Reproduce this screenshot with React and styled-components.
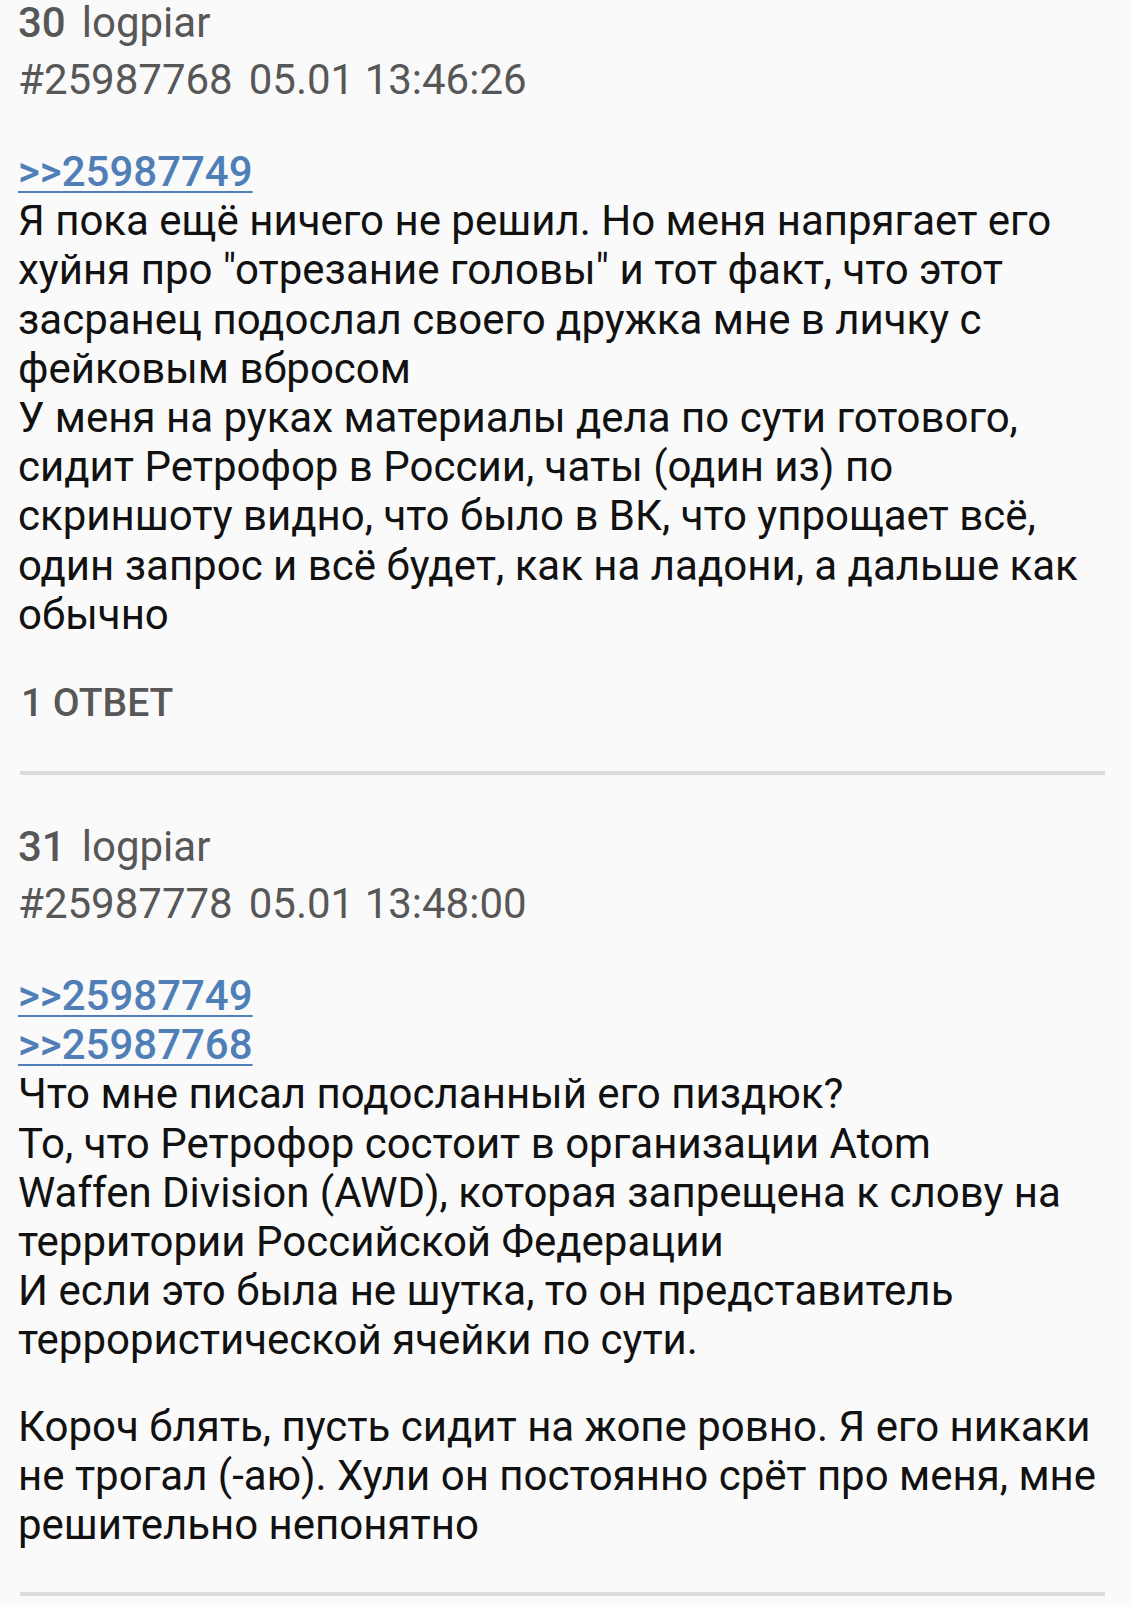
import React from 'react';
import styled, { createGlobalStyle } from 'styled-components';

const GlobalStyle = createGlobalStyle`
  html, body {
    margin: 0;
    padding: 0;
    background-color: #fafafa;
  }

  body {
    font-family: Roboto, "Noto Sans", "Liberation Sans", sans-serif;
    -webkit-font-smoothing: antialiased;
  }
`;

// Styled Components
const Thread = styled.div`
  width: 1132px;
  overflow: hidden;
  background-color: #fafafa;
`;

const Feed = styled.div`
  display: flex;
  flex-direction: column;
`;

// the first post is scrolled partly out of view, so it has no top padding
const Post = styled.article`
  display: flex;
  flex-direction: column;
  padding: ${({ $scrolled }) => ($scrolled ? '0' : '49px')} 18px 43px 18px;
`;

const PostHeader = styled.header`
  display: flex;
  flex-direction: column;
  gap: 12px;
  font-size: 42px;
  line-height: 45px;
  color: #575757;
`;

const HeaderRow = styled.div`
  display: flex;
  gap: 16px;
  white-space: nowrap;
`;

const PostNumber = styled.span`
  font-weight: 500;
`;

const Comment = styled.div`
  margin-top: 45px;
  font-size: 42px;
  line-height: 49.2px;
  color: #111111;
`;

const Paragraph = styled.div`
  & + & {
    margin-top: 37px;
  }
`;

const Line = styled.div`
  white-space: nowrap;
`;

const QuoteLink = styled.a`
  display: block;
  width: fit-content;
  color: #4f7fb6;
  font-weight: 500;
  text-decoration: underline;
  text-decoration-thickness: 2px;
  text-underline-offset: 5px;
  cursor: pointer;
`;

const RepliesButton = styled.button`
  align-self: flex-start;
  margin-top: 40px;
  padding: 0 0 0 3px;
  border: none;
  background: none;
  font-family: inherit;
  font-size: 39px;
  font-weight: 500;
  line-height: 49px;
  color: #575757;
  text-transform: uppercase;
  cursor: pointer;
`;

const Divider = styled.hr`
  height: 4px;
  margin: 0 27px 0 20px;
  border: none;
  background-color: #dcdcdc;
`;

// Data
const posts = [
  {
    number: 30,
    name: 'logpiar',
    id: '25987768',
    date: '05.01 13:46:26',
    quotes: ['25987749'],
    paragraphs: [
      [
        'Я пока ещё ничего не решил. Но меня напрягает его',
        'хуйня про "отрезание головы" и тот факт, что этот',
        'засранец подослал своего дружка мне в личку с',
        'фейковым вбросом',
        'У меня на руках материалы дела по сути готового,',
        'сидит Ретрофор в России, чаты (один из) по',
        'скриншоту видно, что было в ВК, что упрощает всё,',
        'один запрос и всё будет, как на ладони, а дальше как',
        'обычно',
      ],
    ],
    replies: 1,
  },
  {
    number: 31,
    name: 'logpiar',
    id: '25987778',
    date: '05.01 13:48:00',
    quotes: ['25987749', '25987768'],
    paragraphs: [
      [
        'Что мне писал подосланный его пиздюк?',
        'То, что Ретрофор состоит в организации Atom',
        'Waffen Division (AWD), которая запрещена к слову на',
        'территории Российской Федерации',
        'И если это была не шутка, то он представитель',
        'террористической ячейки по сути.',
      ],
      [
        'Короч блять, пусть сидит на жопе ровно. Я его никаки',
        'не трогал (-аю). Хули он постоянно срёт про меня, мне',
        'решительно непонятно',
      ],
    ],
    replies: 0,
  },
];

// Main Component
const PostItem = ({ post, scrolled }) => (
  <>
    <Post $scrolled={scrolled}>
      <PostHeader>
        <HeaderRow>
          <PostNumber>{post.number}</PostNumber>
          <span>{post.name}</span>
        </HeaderRow>
        <HeaderRow>
          <span>#{post.id}</span>
          <span>{post.date}</span>
        </HeaderRow>
      </PostHeader>

      <Comment>
        {post.paragraphs.map((lines, i) => (
          <Paragraph key={i}>
            {i === 0 && post.quotes.map((q) => (
              <QuoteLink key={q}>&gt;&gt;{q}</QuoteLink>
            ))}
            {lines.map((line, j) => (
              <Line key={j}>{line}</Line>
            ))}
          </Paragraph>
        ))}
      </Comment>

      {post.replies > 0 && (
        <RepliesButton type="button">{post.replies} ответ</RepliesButton>
      )}
    </Post>
    <Divider />
  </>
);

const App = () => (
  <Thread>
    <GlobalStyle />
    <Feed>
      {posts.map((post, i) => (
        <PostItem key={post.id} post={post} scrolled={i === 0} />
      ))}
    </Feed>
  </Thread>
);

export default App;
